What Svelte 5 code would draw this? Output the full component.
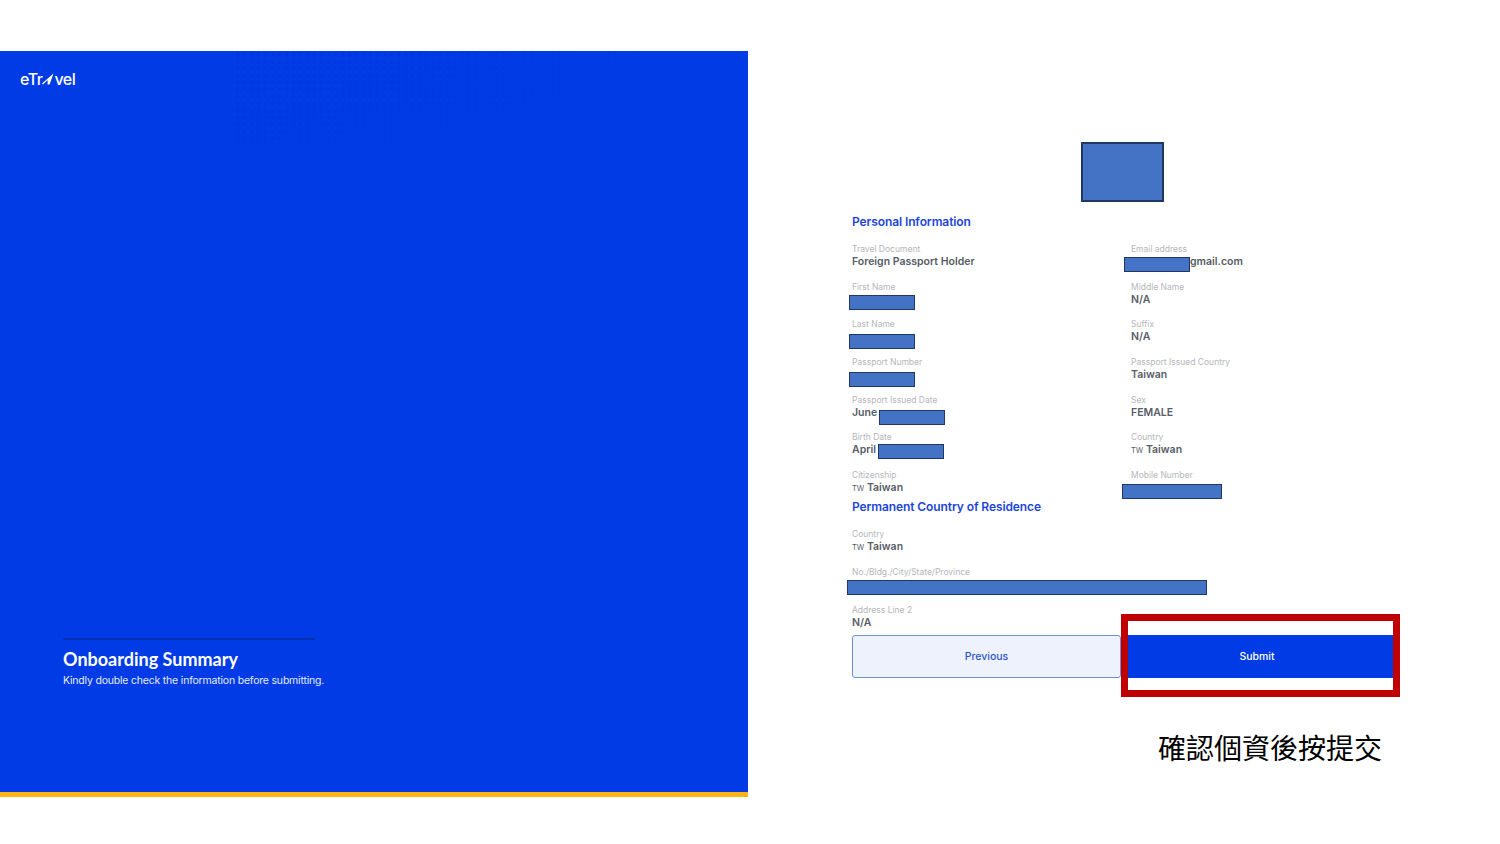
<script lang="ts">
	const personal = [
		{ label: 'Travel Document', value: 'Foreign Passport Holder' },
		{ label: 'Email address', value: 'gmail.com', indent: 59, box: { x: -7, y: 3, w: 66 } },
		{ label: 'First Name', value: '', box: { x: -3, y: 3.5, w: 66 } },
		{ label: 'Middle Name', value: 'N/A' },
		{ label: 'Last Name', value: '', box: { x: -3, y: 5, w: 66 } },
		{ label: 'Suffix', value: 'N/A' },
		{ label: 'Passport Number', value: '', box: { x: -3, y: 5, w: 66 } },
		{ label: 'Passport Issued Country', value: 'Taiwan' },
		{ label: 'Passport Issued Date', value: 'June', box: { x: 27, y: 5, w: 66 } },
		{ label: 'Sex', value: 'FEMALE' },
		{ label: 'Birth Date', value: 'April', box: { x: 26, y: 2, w: 66 } },
		{ label: 'Country', value: 'Taiwan', code: 'TW' },
		{ label: 'Citizenship', value: 'Taiwan', code: 'TW' },
		{ label: 'Mobile Number', value: '', box: { x: -9, y: 4, w: 100 } }
	];

	const residence = [
		{ label: 'Country', value: 'Taiwan', code: 'TW' },
		{ label: 'No./Bldg./City/State/Province', value: '', box: { x: -5, y: 3, w: 360 } },
		{ label: 'Address Line 2', value: 'N/A' }
	];
</script>

{#snippet field(item)}
	<div class="field">
		<span class="label">{item.label}</span>
		<span class="value" style:padding-left={item.indent ? `${item.indent}px` : null}>
			{#if item.code}<small>{item.code}</small>{/if}
			{item.value}
		</span>
		{#if item.box}
			<span class="redact" style="left: {item.box.x}px; top: {item.box.y + 11}px; width: {item.box.w}px"></span>
		{/if}
	</div>
{/snippet}

<div class="page">
	<aside class="panel">
		<div class="dots"></div>
		<div class="logo">
			<span>eTr</span>
			<svg viewBox="0 0 12 12" width="12" height="12" aria-hidden="true">
				<path d="M11.5 .5 L7.6 11.5 L5.6 11.5 L5.6 7 L1 11.5 L0 10.6 Z" fill="#fff" />
			</svg>
			<span>vel</span>
		</div>
		<div class="intro">
			<h1>Onboarding Summary</h1>
			<p>Kindly double check the information before submitting.</p>
		</div>
	</aside>

	<main class="content">
		<div class="form">
			<div class="photo"></div>

			<h2 class="first">Personal Information</h2>
			<div class="grid">
				{#each personal as item}
					{@render field(item)}
				{/each}
			</div>

			<h2 class="second">Permanent Country of Residence</h2>
			<div class="stack">
				{#each residence as item}
					{@render field(item)}
				{/each}
			</div>

			<div class="actions">
				<button class="previous">Previous</button>
				<div class="submit-wrap">
					<button class="submit">Submit</button>
					<div class="highlight"></div>
				</div>
			</div>

			<p class="note">確認個資後按提交</p>
		</div>
	</main>
</div>

<style>
	:global(body) {
		background: #fff;
	}

	.page {
		display: flex;
		height: 844px;
		padding-top: 51px;
		box-sizing: border-box;
		overflow: hidden;
		font-family: Inter, "Liberation Sans", sans-serif;
	}

	.panel {
		position: relative;
		display: flex;
		flex-direction: column;
		justify-content: space-between;
		flex: none;
		width: 748px;
		height: 746px;
		box-sizing: border-box;
		padding: 20px 0 104px 20px;
		background: #003be6;
		border-bottom: 5px solid #fdb515;
		color: #fff;
	}

	.dots {
		position: absolute;
		top: 0;
		left: 234px;
		width: 410px;
		height: 92px;
		background-image: radial-gradient(circle, #0034cc 1.2px, transparent 1.5px);
		background-size: 7px 7px;
		opacity: 0.45;
		-webkit-mask-image: linear-gradient(160deg, #000 30%, transparent 80%);
		mask-image: linear-gradient(160deg, #000 30%, transparent 80%);
	}

	.logo {
		display: flex;
		align-items: center;
		height: 16px;
		font-size: 16px;
		font-weight: 500;
		letter-spacing: -0.5px;
	}

	.intro {
		width: 252px;
		margin-left: 43px;
		padding-top: 9px;
		border-top: 2px solid #0a2fb0;
	}

	h1 {
		margin: 0 0 5px;
		font-family: Lato, sans-serif;
		font-size: 18px;
		line-height: 20px;
		font-weight: 700;
		white-space: nowrap;
	}

	.intro p {
		margin: 0;
		font-size: 10.5px;
		line-height: 14px;
		letter-spacing: -0.2px;
		white-space: nowrap;
		color: #e4ebff;
	}

	.content {
		flex: 1;
		padding-left: 104px;
	}

	.form {
		width: 541px;
		padding-top: 91px;
	}

	.photo {
		width: 79px;
		height: 56px;
		margin: 0 auto;
		background: #4472c4;
		border: 2px solid #1f3864;
	}

	h2 {
		margin: 0;
		font-size: 12px;
		line-height: 16px;
		font-weight: 600;
		letter-spacing: -0.1px;
		color: #1d46d8;
	}

	h2.first {
		margin-top: 12px;
		margin-bottom: 13px;
	}

	h2.second {
		margin-top: 5px;
		margin-bottom: 13px;
	}

	.grid {
		display: grid;
		grid-template-columns: 279px 1fr;
		row-gap: 12.7px;
	}

	.stack {
		display: grid;
		row-gap: 12.7px;
	}

	.field {
		position: relative;
		height: 25px;
	}

	.label {
		display: block;
		height: 12px;
		font-size: 8.5px;
		line-height: 12px;
		color: #b4b6ba;
	}

	.value {
		display: block;
		height: 13px;
		font-size: 10.5px;
		line-height: 13px;
		font-weight: 600;
		color: #575c66;
	}

	.value small {
		font-size: 7.5px;
		font-weight: 400;
	}

	.redact {
		position: absolute;
		height: 15px;
		box-sizing: border-box;
		background: #4472c4;
		border: 1.5px solid #1f3864;
	}

	.actions {
		display: grid;
		grid-template-columns: 269px 272px;
		margin-top: 6px;
		height: 43px;
	}

	button {
		height: 43px;
		padding: 0;
		font-family: inherit;
		font-size: 10.5px;
		font-weight: 500;
	}

	.previous {
		width: 100%;
		background: #edf2fc;
		border: 1px solid #6f8fd8;
		border-radius: 3px;
		color: #2f55c8;
	}

	.submit-wrap {
		position: relative;
	}

	.submit {
		width: 100%;
		background: #003be6;
		border: 0;
		color: #fff;
	}

	.highlight {
		position: absolute;
		top: -21px;
		left: 0;
		right: -7px;
		bottom: -19px;
		border: 7px solid #c00000;
	}

	.note {
		margin: 49px 0 0 306px;
		font-family: "Noto Sans CJK TC", sans-serif;
		font-size: 28px;
		line-height: 40px;
		font-weight: 400;
		white-space: nowrap;
		color: #000;
	}
</style>
